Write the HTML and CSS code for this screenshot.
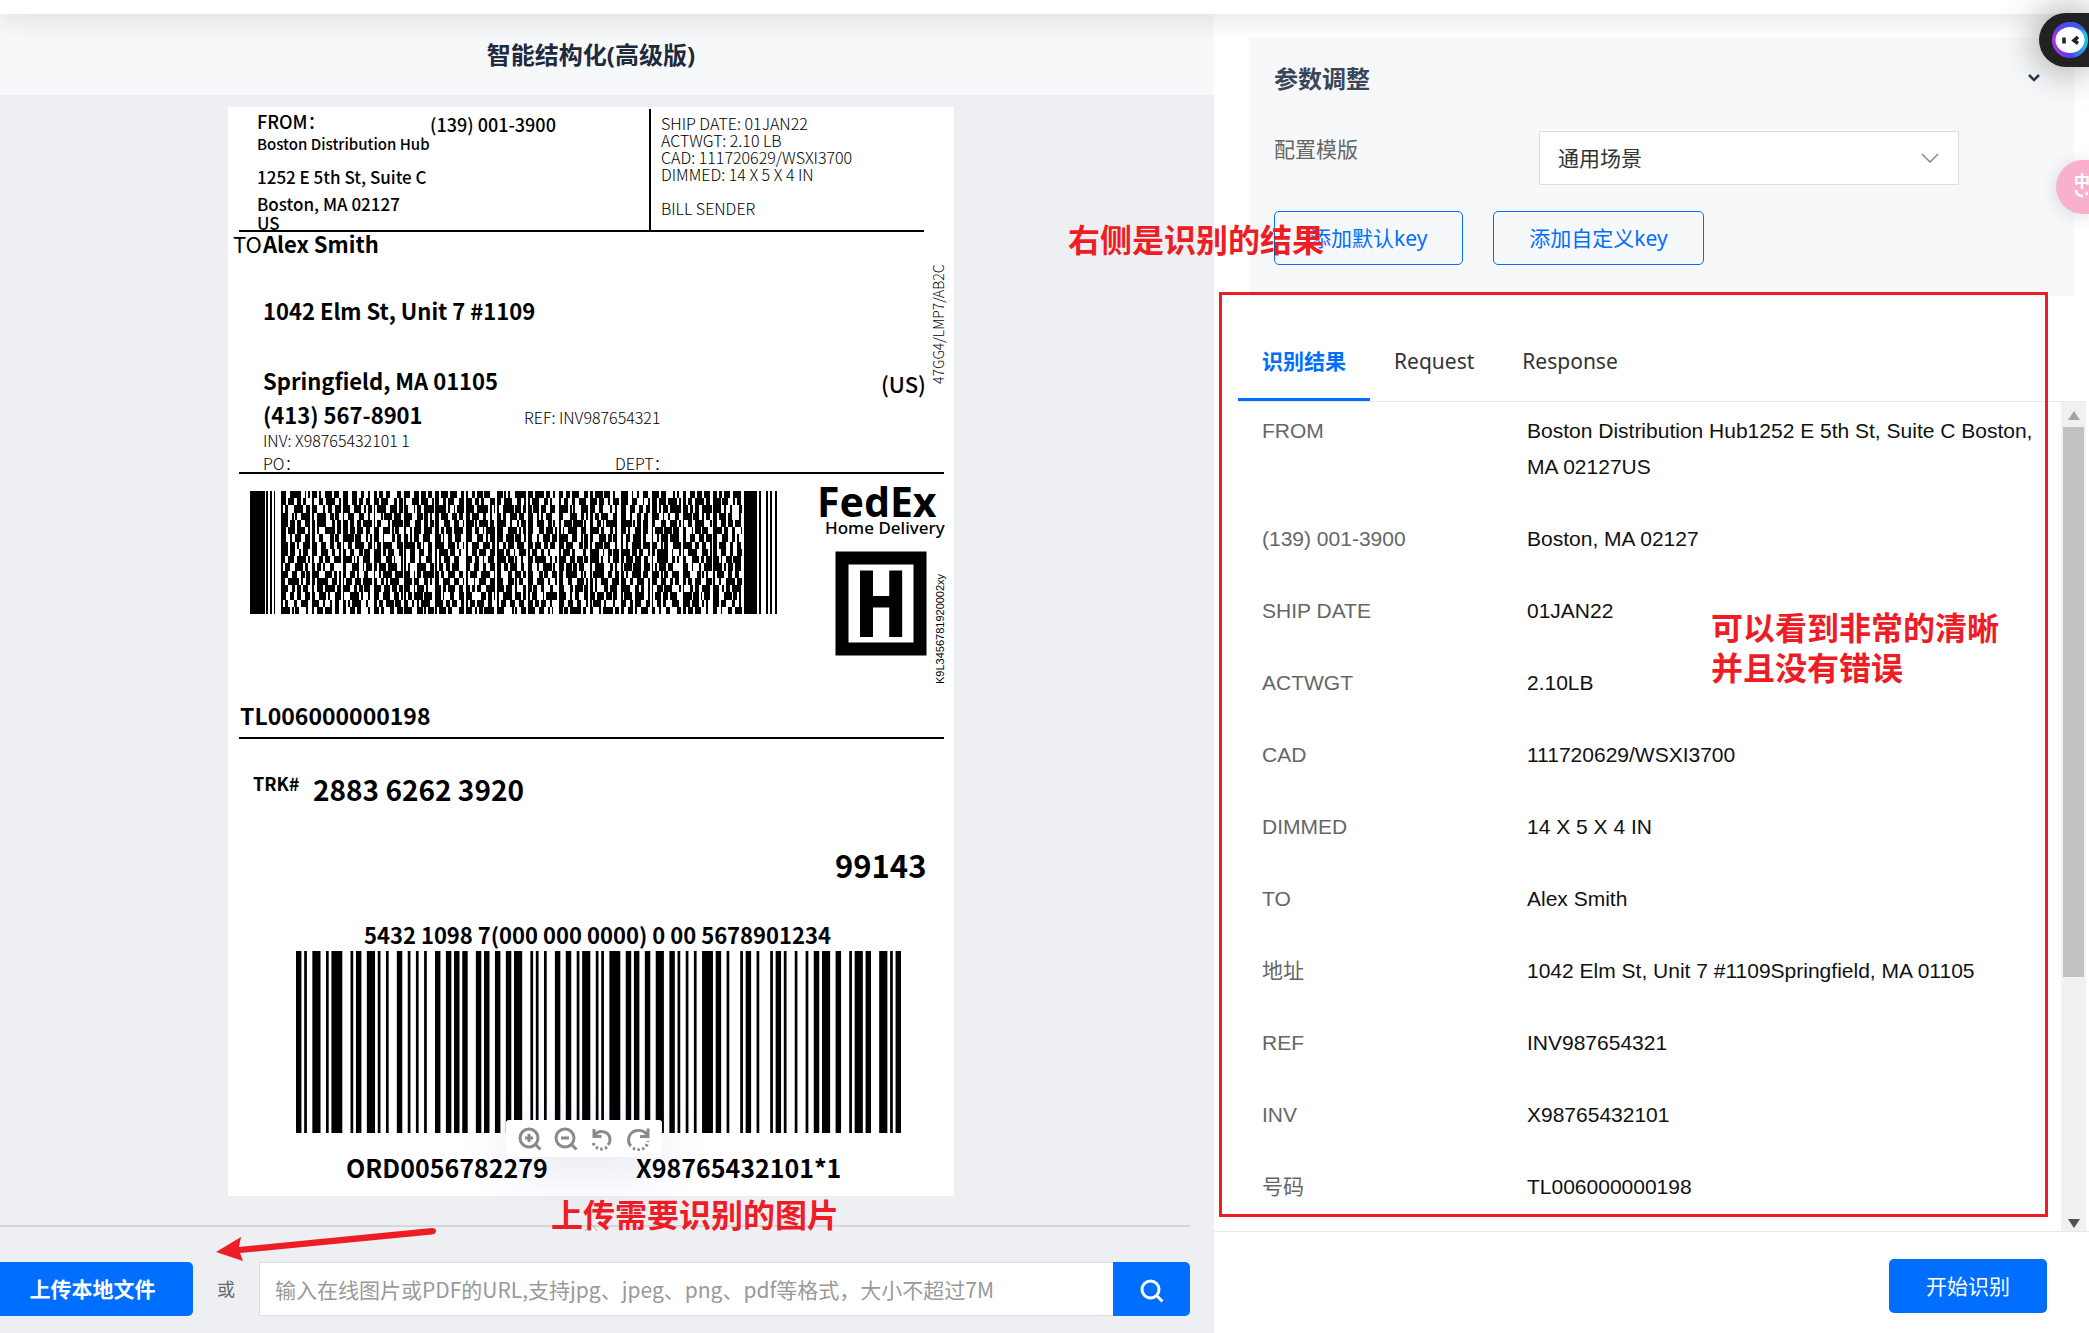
FILE: index.html
```html
<!DOCTYPE html>
<html lang="zh-CN">
<head>
<meta charset="utf-8">
<title>智能结构化(高级版)</title>
<link rel="stylesheet" href="styles.css">
</head>
<body>
<header class="topbar"></header>
<main class="workspace">
  <section class="preview">
    <h1 class="preview-title">智能结构化(高级版)</h1>
    <div class="stage">
      <div class="label">
        <svg class="label-image" viewBox="0 0 726 1089" role="img" aria-label="Shipping label">
          <rect width="726" height="1089" fill="#fff"/>
          <g fill="#000">
            <rect x="11" y="123" width="685" height="2"/>
            <rect x="421" y="2" width="2" height="122"/>
            <rect x="11" y="365" width="705" height="2"/>
            <rect x="11" y="630" width="705" height="2"/>
          </g>
          <g class="han medium">
            <text class="s18" x="29" y="22">FROM：</text>
            <text class="s18" x="202" y="25">(139) 001-3900</text>
            <text class="s15" x="29" y="43">Boston Distribution Hub</text>
            <text class="s17" x="29" y="77">1252 E 5th St, Suite C</text>
            <text class="s17" x="29" y="104">Boston, MA 02127</text>
            <text class="s17" x="29" y="123">US</text>
          </g>
          <g class="han light s16">
            <text x="433" y="23">SHIP DATE: 01JAN22</text>
            <text x="433" y="40">ACTWGT: 2.10 LB</text>
            <text x="433" y="57">CAD: 111720629/WSXI3700</text>
            <text x="433" y="74">DIMMED: 14 X 5 X 4 IN</text>
            <text x="433" y="108">BILL SENDER</text>
          </g>
          <text class="han s22" x="5" y="146">TO</text>
          <g class="han bold s22">
            <text x="35" y="146">Alex Smith</text>
            <text x="35" y="213">1042 Elm St, Unit 7 #1109</text>
            <text x="35" y="283">Springfield, MA 01105</text>
            <text x="35" y="317">(413) 567-8901</text>
          </g>
          <g class="han light s16">
            <text x="296" y="317">REF: INV987654321</text>
            <text x="35" y="340">INV: X98765432101 1</text>
            <text x="35" y="363">PO：</text>
            <text x="387" y="363">DEPT：</text>
          </g>
          <text class="han s22 medium" x="653" y="286">(US)</text>
          <text class="han light s14" transform="translate(716 277) rotate(-90)">47GG4/LMP7/AB2C</text>
          <text class="narrow s11" transform="translate(716 577) rotate(-90)">K9L3456781920002xy</text>
          <svg x="22" y="384" width="527" height="123" viewBox="0 0 290 17" preserveAspectRatio="none" shape-rendering="crispEdges"><path id="stacked-code"/></svg>
          <text class="brand" x="589" y="410">FedEx</text>
          <text class="brand-sub" x="597" y="427">Home Delivery</text>
          <rect x="614" y="451" width="78" height="91" fill="#fff" stroke="#000" stroke-width="13"/>
          <text class="mark" x="653" y="530" text-anchor="middle">H</text>
          <g class="han bold">
            <text class="s23" x="12" y="618">TL006000000198</text>
            <text class="s28" x="85" y="694">2883 6262 3920</text>
            <text class="s31" x="607" y="771">99143</text>
            <text class="s22" x="136" y="837">5432 1098 7(000 000 0000) 0 00 5678901234</text>
            <text class="s25" x="118" y="1071">ORD0056782279</text>
            <text class="s25" x="408" y="1071">X98765432101*1</text>
            <text class="s18" x="25" y="684">TRK#</text>
          </g>
          <svg x="68" y="844" width="605" height="182" viewBox="0 0 222 1" preserveAspectRatio="none"><path id="linear-code"/></svg>
        </svg>
        <div class="tools">
          <button type="button" aria-label="放大"><svg viewBox="0 0 24 24"><circle cx="11" cy="11" r="9"/><path d="M17 17l5.500 5.500M7 11h8M11 7v8"/></svg></button>
          <button type="button" aria-label="缩小"><svg viewBox="0 0 24 24"><circle cx="11" cy="11" r="9"/><path d="M17 17l5.500 5.500M7 11h8"/></svg></button>
          <button type="button" aria-label="向左旋转"><svg viewBox="0 0 24 24"><path d="M4 2v7.500h7.500M5 8C9 2 20 4 20 13q0 3-2 5"/><path d="M17 20A8.500 8.500 0 0 1 3 14" stroke-dasharray="2.500 2.200"/></svg></button>
          <button type="button" aria-label="向右旋转"><svg viewBox="0 0 24 24"><path d="M22 1.500v8h-8M21 8C16 0 2.500 3 2.500 13q0 4 2.500 6"/><path d="M7 21A9.500 9.500 0 0 0 22 14" stroke-dasharray="2.500 2.200"/></svg></button>
        </div>
      </div>
    </div>
    <div class="divider"><svg viewBox="0 0 14 9"><path d="M1 8l6-7 6 7"/></svg></div>
    <form class="source">
      <button type="button" class="btn upload">上传本地文件</button>
      <label class="or" for="url">或</label>
      <div class="url-group">
        <input id="url" type="text" placeholder="输入在线图片或PDF的URL,支持jpg、jpeg、png、pdf等格式，大小不超过7M">
        <button type="button" class="btn search" aria-label="搜索"><svg viewBox="0 0 24 24"><circle cx="10.500" cy="10.500" r="8.500"/><path d="M16.500 16.500l6 6"/></svg></button>
      </div>
    </form>
  </section>

  <section class="side">
    <div class="params">
      <div class="params-head">
        <h2>参数调整</h2>
        <svg viewBox="0 0 12 8"><path d="M1 1l5 5 5-5"/></svg>
      </div>
      <div class="field">
        <label for="template">配置模版</label>
        <div class="select-wrap">
          <select id="template"><option>通用场景</option></select>
          <svg viewBox="0 0 18 10"><path d="M1 1l8 8 8-8"/></svg>
        </div>
      </div>
      <div class="keys">
        <button type="button">添加默认key</button>
        <button type="button">添加自定义key</button>
      </div>
    </div>
    <nav class="tabs">
      <a href="#result" class="active">识别结果</a>
      <a href="#request">Request</a>
      <a href="#response">Response</a>
    </nav>
    <div class="results" id="result">
      <table>
        <tr><th scope="row">FROM</th><td>Boston Distribution Hub1252 E 5th St, Suite C Boston, MA 02127US</td></tr>
        <tr><th scope="row">(139) 001-3900</th><td>Boston, MA 02127</td></tr>
        <tr><th scope="row">SHIP DATE</th><td>01JAN22</td></tr>
        <tr><th scope="row">ACTWGT</th><td>2.10LB</td></tr>
        <tr><th scope="row">CAD</th><td>111720629/WSXI3700</td></tr>
        <tr><th scope="row">DIMMED</th><td>14 X 5 X 4 IN</td></tr>
        <tr><th scope="row">TO</th><td>Alex Smith</td></tr>
        <tr><th scope="row">地址</th><td>1042 Elm St, Unit 7 #1109Springfield, MA 01105</td></tr>
        <tr><th scope="row">REF</th><td>INV987654321</td></tr>
        <tr><th scope="row">INV</th><td>X98765432101</td></tr>
        <tr><th scope="row">号码</th><td>TL006000000198</td></tr>
      </table>
      <div class="scrollbar">
        <svg viewBox="0 0 12 9"><path d="M6 0l6 9H0z" fill="#a3a3a3"/></svg>
        <div class="track"><div class="thumb"></div></div>
        <svg viewBox="0 0 12 9"><path d="M0 0h12L6 9z" fill="#505050"/></svg>
      </div>
    </div>
    <footer class="actions"><button type="button" class="btn start">开始识别</button></footer>
  </section>
</main>

<div class="notes">
  <p class="note note-right">右侧是识别的结果</p>
  <p class="note note-clear">可以看到非常的清晰<br>并且没有错误</p>
  <p class="note note-upload">上传需要识别的图片</p>
  <div class="frame"></div>
  <svg class="arrow" viewBox="0 0 222 36"><path d="M217 1q4 0 4 3 0 3-4 3.500L25 26l3 8L1 25 26 10l-2 10z"/></svg>
</div>
<div class="assistant">
  <svg viewBox="0 0 36 36">
    <defs><linearGradient id="ring" x1="0" y1="1" x2="1" y2="0.8"><stop offset="0" stop-color="#d02be0"/><stop offset="0.5" stop-color="#4b3df5"/><stop offset="1" stop-color="#22c4e0"/></linearGradient></defs>
    <circle cx="18" cy="18" r="18" fill="url(#ring)"/>
    <path d="M2 10a18 18 0 0 1 32 0q-16-10-32 0z" fill="#4a4df8"/>
    <ellipse cx="18" cy="18" rx="14.500" ry="13" fill="#fff"/>
    <path d="M12 15.500v6M26 15l-4 3.500 4 3" fill="none" stroke="#222" stroke-width="3.500"/>
  </svg>
</div>
<div class="translate"><span>中</span><svg viewBox="0 0 14 8"><path d="M2 0q0 6 7 6M12 5l2-3"/></svg></div>
<script src="script.js"></script>
</body>
</html>
```

FILE: styles.css
```css
* { box-sizing: border-box; }
body {
  margin: 0;
  height: 100vh;
  display: flex;
  flex-direction: column;
  overflow: hidden;
  position: relative;
  background: #fff;
  color: #333;
  font: 21px/36px "Noto Sans", "Noto Sans CJK SC", sans-serif;
}
button, input, select { font: inherit; margin: 0; }
h1, h2, p { margin: 0; }

.topbar {
  height: 14px;
  flex: none;
  background: #fff;
  box-shadow: 0 3px 26px rgba(0, 0, 0, 0.16);
  position: relative;
  z-index: 1;
}
.workspace {
  flex: 1;
  min-height: 0;
  display: grid;
  grid-template-columns: minmax(0, 1214fr) minmax(0, 875fr);
}

.preview {
  margin-left: -8px;
  padding-right: 24px;
  min-height: 0;
  display: flex;
  flex-direction: column;
  background: #eeeff3;
}
.preview-title {
  height: 81px;
  flex: none;
  margin-right: -24px;
  padding-right: 24px;
  background: #f7f8fa;
  color: #1f2a3c;
  font-size: 24px;
  font-weight: 700;
  line-height: 81px;
  text-align: center;
}
.stage {
  flex: 1;
  min-height: 0;
  padding: 12px 0 29px;
  display: flex;
  justify-content: center;
}
.label { position: relative; height: 100%; aspect-ratio: 726 / 1089; }
.label-image { display: block; width: 100%; height: 100%; }
.han { font-family: "Noto Sans CJK SC", sans-serif; }
.narrow { font-family: "Liberation Sans", sans-serif; }
.light { font-weight: 300; }
.medium { font-weight: 500; }
.bold { font-weight: 700; }
.s11 { font-size: 11px; }
.s14 { font-size: 14px; }
.s15 { font-size: 15px; }
.s16 { font-size: 16px; }
.s17 { font-size: 17px; }
.s18 { font-size: 18px; }
.s22 { font-size: 22px; }
.s23 { font-size: 23px; }
.s25 { font-size: 25px; }
.s28 { font-size: 28px; }
.s31 { font-size: 31px; }
.brand { font: 700 41px "Noto Sans", sans-serif; }
.brand-sub { font: 500 17px "Noto Sans", sans-serif; }
.mark { font: 700 90px "DejaVu Sans Mono", monospace; }

.tools {
  position: absolute;
  left: 50%;
  bottom: 39px;
  width: 156px;
  height: 37px;
  margin-left: -85px;
  padding: 0 12px;
  display: flex;
  align-items: center;
  gap: 12px;
  background: #fff;
  border-radius: 3px;
  box-shadow: 0 12px 48px rgba(60, 80, 160, 0.15);
}
.tools button {
  width: 24px;
  height: 24px;
  padding: 0;
  border: 0;
  background: none;
}
.tools svg { display: block; width: 24px; height: 24px; fill: none; stroke: #8a8a8a; stroke-width: 3; }

.divider { height: 2px; flex: none; background: #d6d7da; display: flex; justify-content: center; }
.divider svg { width: 14px; height: 9px; flex: none; margin-top: -2px; fill: #fff; stroke: #aaa; }
.source { display: flex; align-items: center; height: 106px; flex: none; padding: 35px 0 17px; }
.btn { border: 0; background: #006eff; color: #fff; height: 54px; border-radius: 5px; }
.upload { width: 201px; font-weight: 700; padding: 0; }
.or { width: 66px; text-align: center; font-size: 18px; color: #666; }
.url-group { flex: 1; display: flex; }
.url-group input {
  flex: 1;
  min-width: 0;
  height: 54px;
  padding: 0 15px;
  border: 1px solid #ddd;
  border-right: 0;
  border-radius: 0;
  background: #fff;
  font-family: "Noto Sans CJK SC", sans-serif;
}
.url-group input::placeholder { color: #999; opacity: 1; }
.search { width: 77px; padding: 0; border-radius: 0 5px 5px 0; display: flex; align-items: center; justify-content: center; }
.search svg { width: 24px; height: 24px; fill: none; stroke: #fff; stroke-width: 3; margin-top: 4px; }

.side { display: flex; flex-direction: column; min-height: 0; background: #fff; }
.params { height: 258px; flex: none; margin: 24px 15px 0 36px; padding: 23px 24px 0; background: #f7f8fa; }
.params-head { display: flex; align-items: center; justify-content: space-between; padding-right: 10px; }
.params-head h2 { font-size: 24px; line-height: 36px; color: #3b465a; }
.params-head svg { width: 12px; height: 8px; margin-top: -3px; fill: none; stroke: #2f3a50; stroke-width: 2.5; }
.field { display: grid; grid-template-columns: 265px 420px; margin-top: 34px; color: #666; }
.select-wrap { position: relative; }
.select-wrap select {
  display: block;
  width: 100%;
  height: 54px;
  padding: 0 18px;
  border: 1px solid #ddd;
  border-radius: 0;
  background: #fff;
  color: #333;
  appearance: none;
}
.select-wrap svg { position: absolute; right: 20px; top: 22px; width: 18px; height: 10px; fill: none; stroke: #888; stroke-width: 1.5; }
.keys { display: flex; gap: 30px; margin-top: 26px; }
.keys button { height: 54px; padding: 0 35px; border: 1px solid #006eff; border-radius: 5px; background: transparent; color: #006eff; }

.tabs { display: flex; flex: none; margin: 30px 3px 0 24px; height: 76px; border-bottom: 1px solid #e8e8e8; }
.tabs a { padding: 17px 24px 0; color: #333; text-decoration: none; height: 75px; }
.tabs .active { color: #006eff; font-weight: 700; border-bottom: 3px solid #006eff; }
.results {
  flex: 1;
  min-height: 0;
  display: flex;
  justify-content: space-between;
  padding: 0 3px 0 48px;
  font-family: "Liberation Sans", "Noto Sans CJK SC", sans-serif;
}
.results table { border-collapse: collapse; margin-top: 11px; width: 782px; height: max-content; table-layout: fixed; }
.results th, .results td { padding: 0 0 36px; vertical-align: top; text-align: left; font-weight: 400; }
.results th { width: 265px; color: #666; }
.results td { color: #111; }
.scrollbar {
  width: 25px;
  flex: none;
  display: flex;
  flex-direction: column;
  align-items: center;
  padding: 9px 0 3px;
  gap: 7px;
  background: #f1f1f1;
}
.scrollbar svg { width: 12px; height: 9px; flex: none; }
.track { flex: 1; width: 21px; }
.thumb { height: 70%; background: #c1c1c1; }
.actions { height: 102px; flex: none; border-top: 1px solid #e8e8e8; padding: 27px 42px 0; display: flex; justify-content: flex-end; align-items: flex-start; }
.start { padding: 0 37px; }

.notes, .assistant, .translate { z-index: 2; }
.notes { position: absolute; inset: 0; pointer-events: none; }
.note { position: absolute; color: #ee1c24; font-size: 32px; font-weight: 700; line-height: 40px; white-space: nowrap; }
.note-right { left: 1068px; top: 220px; }
.note-clear { left: 1711px; top: 608px; }
.note-upload { left: 551px; top: 1195px; }
.frame { position: absolute; left: 1219px; top: 292px; width: 829px; height: 925px; border: 3px solid #ee1c24; }
.arrow { position: absolute; left: 215px; top: 1227px; width: 222px; height: 36px; fill: #ee1c24; }
.assistant {
  position: absolute;
  right: 0;
  top: 13px;
  width: 50px;
  height: 54px;
  padding: 9px 0 0 13px;
  border-radius: 27px 0 0 27px;
  background: #222;
  box-shadow: 0 0 40px rgba(0, 0, 0, 0.45);
}
.assistant svg { display: block; width: 36px; height: 36px; }
.translate {
  position: absolute;
  right: 0;
  top: 160px;
  width: 33px;
  height: 54px;
  padding: 12px 0 0 18px;
  border-radius: 27px 0 0 27px;
  background: #f8b0cd;
  box-shadow: 0 2px 18px rgba(0, 0, 0, 0.14);
  color: #fff;
  font-size: 16px;
  font-weight: 700;
  line-height: 18px;
  overflow: hidden;
}
.translate span, .translate svg { display: block; }
.translate svg { width: 14px; height: 8px; fill: none; stroke: #fff; stroke-width: 2.5; }
```

FILE: script.js
```js
// Linear barcode: each pair is the first and last module of a bar.
const bars = [0,2,3,4,6,9,11,12,13,17,20,21,22,24,26,29,30,31,33,34,37,39,41,42,44,45,47,48,51,53,55,57,58,60,61,63,66,68,69,71,73,75,77,79,80,83,86,87,88,89,91,92,95,97,99,101,103,104,105,108,110,111,112,113,115,119,121,123,124,126,128,130,132,135,137,139,140,141,143,144,146,147,149,153,154,156,158,159,163,164,165,167,169,170,174,175,176,178,179,180,183,184,187,188,190,192,193,196,198,200,203,204,205,208,209,211,214,217,218,219,220,222];
let linear = "";
for (let i = 0; i < bars.length; i += 2) {
  linear += `M${bars[i]} 0H${bars[i + 1]}V1H${bars[i]}z`;
}
document.getElementById("linear-code").setAttribute("d", linear);

// Stacked barcode: 17 rows, start pattern, 15 codewords of 17 modules, stop pattern.
let seed = 417;
const next = n => {
  seed = (seed * 16807) % 2147483647;
  return seed % n;
};
let stacked = "";
const draw = (x, y, h, widths) => {
  widths.forEach((w, i) => {
    if (i % 2 === 0) stacked += `M${x} ${y}h${w}v${h}h${-w}z`;
    x += w;
  });
};
draw(0, 0, 17, [8, 1, 1, 1, 1, 1, 1, 3]);
for (let row = 0; row < 17; row++) {
  for (let col = 0; col < 15; col++) {
    const widths = [1, 1, 1, 1, 1, 1, 1, 1];
    let left = 9;
    while (left > 0) {
      // Favour a wide bar so that each codeword has a dark core.
      const i = next(3) === 0 ? 2 * (row + col + next(2)) % 8 : next(8);
      if (widths[i] < 6) { widths[i]++; left--; }
    }
    draw(17 + col * 17, row, 1, widths);
  }
}
draw(272, 0, 17, [7, 1, 1, 3, 1, 1, 1, 2, 1]);
document.getElementById("stacked-code").setAttribute("d", stacked);
```
